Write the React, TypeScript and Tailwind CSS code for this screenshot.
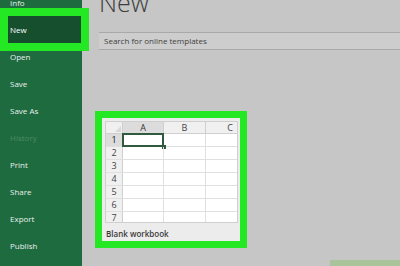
const menu = ['Info', 'New', 'Open', 'Save', 'Save As', 'History', 'Print', 'Share', 'Export', 'Publish']

const rows = [1, 2, 3, 4, 5, 6, 7]

function Sidebar() {
  return (
    <div className="w-[82px] shrink-0 bg-[#1e6b40] relative z-10">
      <div className="mt-[-11px] flex flex-col">
        {menu.map((item) =>
          item === 'New' ? (
            <div key={item} className="h-[27px] ml-[8px] w-[73px] flex items-center pl-[2px] bg-[#164f2e] text-white shadow-[0_0_0_8px_#24e824]">
              {item}
            </div>
          ) : (
            <div
              key={item}
              className={`h-[27px] flex items-center pl-[10px] ${item === 'History' ? 'text-[#4f8a66]' : 'text-[#e8f1ec]'}`}
            >
              {item}
            </div>
          )
        )}
      </div>
    </div>
  )
}

function Workbook() {
  return (
    <div className="ml-[-4px] w-[152px] h-[137px] bg-[#24e824] p-[7px]">
      <div className="h-full bg-[#ececec] px-[3px] pt-[3px] flex flex-col">
        <div className="h-[102px] w-[133px] overflow-hidden bg-white border border-[#cfcfcf] text-[9px] text-[#444]">
          <div className="flex h-[12px] bg-[#f0f0f0] border-b border-[#cfcfcf]">
            <div className="w-[17px] border-r border-[#cfcfcf] relative">
              <div className="absolute right-[1px] bottom-[1px] w-0 h-0 border-l-[6px] border-l-transparent border-b-[6px] border-b-[#d8d8d8]" />
            </div>
            <div className="w-[41px] bg-[#dcdcdc] border-r border-[#cfcfcf] flex items-center justify-center text-[#333]">A</div>
            <div className="w-[42px] border-r border-[#cfcfcf] flex items-center justify-center">B</div>
            <div className="flex-1 flex items-center justify-end pr-[4px]">C</div>
          </div>
          {rows.map((r) => (
            <div key={r} className="flex h-[13px] border-b border-[#e0e0e0]">
              <div className={`w-[17px] border-r border-[#cfcfcf] flex items-center justify-center ${r === 1 ? 'bg-[#dcdcdc] text-[#222]' : 'bg-[#f0f0f0]'}`}>
                {r}
              </div>
              <div className="w-[41px] border-r border-[#e0e0e0] relative">
                {r === 1 && (
                  <div className="absolute left-[-1px] top-[-1px] right-[-1px] bottom-[-1px] border-2 border-[#2f5a3e]">
                    <div className="absolute right-[-4px] bottom-[-4px] w-[4px] h-[4px] bg-[#2f5a3e]" />
                  </div>
                )}
              </div>
              <div className="w-[42px] border-r border-[#e0e0e0]" />
              <div className="flex-1" />
            </div>
          ))}
        </div>
        <div className="mt-[5px] pl-[1px] text-[8px] font-semibold text-[#3a3a3a]">Blank workbook</div>
      </div>
    </div>
  )
}

export default function App() {
  return (
    <div className="w-[400px] h-[266px] overflow-hidden flex bg-[#c6c6c6] text-[8px] font-['Open_Sans',sans-serif]">
      <Sidebar />
      <div className="flex-1 flex flex-col pl-[17px]">
        <div className="mt-[-10px] h-[30px] text-[25px] font-light leading-none text-[#3c3c3c]">New</div>
        <div className="mt-[13px] h-[19px] border-y border-[#a9a9a9] bg-[#cdcdcd] flex items-center pl-[5px] text-[#3f3f3f]">
          Search for online templates
        </div>
        <div className="mt-[61px]">
          <Workbook />
        </div>
        <div className="mt-[12px] self-end w-[70px] h-[6px] bg-[#a9c39b]" />
      </div>
    </div>
  )
}
